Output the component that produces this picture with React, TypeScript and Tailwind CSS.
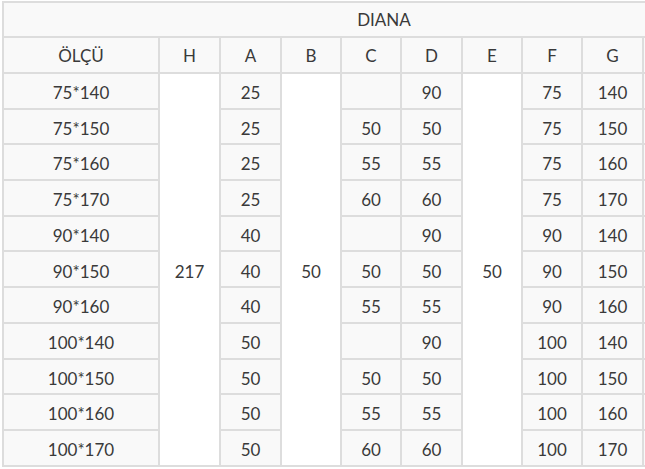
import React from 'react';

interface SizeRow {
  size: string;
  a: string;
  c: string;
  d: string;
  f: string;
  g: string;
}

const rows: SizeRow[] = [
  { size: '75*140', a: '25', c: '', d: '90', f: '75', g: '140' },
  { size: '75*150', a: '25', c: '50', d: '50', f: '75', g: '150' },
  { size: '75*160', a: '25', c: '55', d: '55', f: '75', g: '160' },
  { size: '75*170', a: '25', c: '60', d: '60', f: '75', g: '170' },
  { size: '90*140', a: '40', c: '', d: '90', f: '90', g: '140' },
  { size: '90*150', a: '40', c: '50', d: '50', f: '90', g: '150' },
  { size: '90*160', a: '40', c: '55', d: '55', f: '90', g: '160' },
  { size: '100*140', a: '50', c: '', d: '90', f: '100', g: '140' },
  { size: '100*150', a: '50', c: '50', d: '50', f: '100', g: '150' },
  { size: '100*160', a: '50', c: '55', d: '55', f: '100', g: '160' },
  { size: '100*170', a: '50', c: '60', d: '60', f: '100', g: '170' },
];

// the last two columns run past the window edge
const headers = ['ÖLÇÜ', 'H', 'A', 'B', 'C', 'D', 'E', 'F', 'G', '', ''];

function Cell({ children, className = '' }: { children?: React.ReactNode; className?: string }) {
  return (
    <div className={`flex items-center justify-center ${className}`}>
      {children}
    </div>
  );
}

export default function App() {
  return (
    <div className="w-[645px] h-[469px] overflow-hidden bg-white pl-[2px] pt-[1px]">
      <div
        className="grid w-max gap-[2px] border-2 border-[#dddddd] bg-[#dddddd] text-[17px] text-[#3a3a3a] grid-cols-[154px_59px_59px_58px_58px_59px_58px_58px_59px_59px_59px] grid-rows-[33px_34px_repeat(11,33.7px)]"
        style={{ fontFamily: 'Lato, "Liberation Sans", sans-serif' }}
      >
        <Cell className="col-span-11 bg-[#f9f9f9]">DIANA</Cell>
        {headers.map((h, i) => (
          <Cell key={i} className="bg-[#f9f9f9] pt-[2px]">{h}</Cell>
        ))}
        {rows.map((r, i) => (
          <React.Fragment key={r.size}>
            <Cell className="bg-[#f9f9f9] pt-[4px]">{r.size}</Cell>
            {i === 0 && <Cell className="row-span-11 bg-white pt-[4px]">217</Cell>}
            <Cell className="bg-[#f9f9f9] pt-[4px]">{r.a}</Cell>
            {i === 0 && <Cell className="row-span-11 bg-white pt-[4px]">50</Cell>}
            <Cell className="bg-[#f9f9f9] pt-[4px]">{r.c}</Cell>
            <Cell className="bg-[#f9f9f9] pt-[4px]">{r.d}</Cell>
            {i === 0 && <Cell className="row-span-11 bg-white pt-[4px]">50</Cell>}
            <Cell className="bg-[#f9f9f9] pt-[4px]">{r.f}</Cell>
            <Cell className="bg-[#f9f9f9] pt-[4px]">{r.g}</Cell>
            <Cell className="bg-[#f9f9f9]"></Cell>
            <Cell className="bg-[#f9f9f9]"></Cell>
          </React.Fragment>
        ))}
      </div>
    </div>
  );
}
